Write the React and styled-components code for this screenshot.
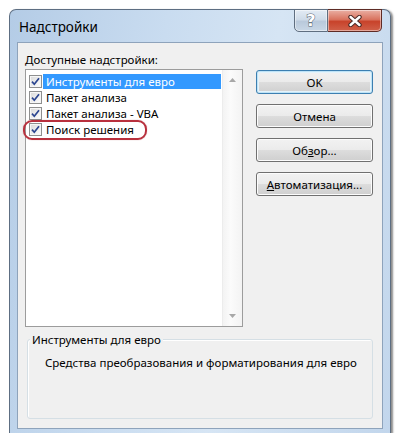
import React from "react"
import styled, { createGlobalStyle } from "styled-components"

const GlobalStyle = createGlobalStyle`
  body {
    margin: 0;
    background: #fff;
    font-family: "Noto Sans", "Segoe UI", sans-serif;
    color: #000;
  }
`

const Window = styled.div`
  box-sizing: border-box;
  width: 382px;
  height: 424px;
  margin: 9px 0 0 9px;
  display: flex;
  flex-direction: column;
  border: 1px solid #5d6e82;
  border-bottom: none;
  border-radius: 7px 7px 0 0;
  background: linear-gradient(100deg, #b4cce6 0%, #c9dcf0 35%, #d6e5f4 60%, #c2d6ec 100%);
  box-shadow: 2px 1px 2px rgba(0, 0, 0, 0.45);
`

const TitleBar = styled.div`
  height: 32px;
  display: flex;
  justify-content: space-between;
  padding: 0 8px 0 9px;
`

const Title = styled.div`
  align-self: center;
  font-size: 13.5px;
  padding-top: 2px;
`

const Controls = styled.div`
  display: flex;
  margin-top: -1px;
  height: 23px;
`

const CaptionButton = styled.div`
  box-sizing: border-box;
  width: ${({ $close }) => ($close ? "54px" : "34px")};
  height: 23px;
  display: flex;
  align-items: center;
  justify-content: center;
  border: 1px solid ${({ $close }) => ($close ? "#5e2b25" : "#5f6e80")};
  border-left: ${({ $close }) => ($close ? "none" : undefined)};
  border-radius: ${({ $close }) => ($close ? "0 0 5px 0" : "0 0 0 5px")};
  background: ${({ $close }) =>
    $close
      ? "linear-gradient(180deg, #eab0a4 0%, #d9735f 45%, #c8432b 55%, #d0614a 100%)"
      : "linear-gradient(180deg, #e3ebf4 0%, #cfdbe8 45%, #b9c9db 55%, #c9d7e6 100%)"};
  box-shadow: inset 0 0 0 1px rgba(255, 255, 255, 0.45);
`

const HelpGlyph = styled.span`
  font-family: "DejaVu Sans", sans-serif;
  font-weight: bold;
  font-size: 16px;
  line-height: 16px;
  color: #fff;
  -webkit-text-stroke: 1px #56626f;
  paint-order: stroke fill;
`

const Client = styled.div`
  flex: 1;
  margin: 0 7px 4px 7px;
  border: 1px solid #8ea3bb;
  background: #f0f0f0;
  padding: 9px 9px 0 7px;
  display: flex;
  flex-direction: column;
  font-size: 11.5px;
`

const FieldLabel = styled.div`
  line-height: 16px;
  margin-bottom: 1px;
`

const MainRow = styled.div`
  display: flex;
  gap: 13px;
`

const ListBox = styled.div`
  position: relative;
  box-sizing: border-box;
  width: 218px;
  height: 258px;
  border: 1px solid #9c9c9c;
  background: #fff;
  display: flex;
`

const Items = styled.div`
  flex: 1;
  padding: 3px 1px 0 3px;
`

const Item = styled.div`
  display: flex;
  align-items: center;
  height: 16px;
`

const ItemText = styled.div`
  flex: 1;
  margin-left: 1px;
  padding-left: 3px;
  line-height: 15px;
  height: 15px;
  background: ${({ $selected }) => ($selected ? "#3399ff" : "transparent")};
  color: ${({ $selected }) => ($selected ? "#fff" : "#000")};
  white-space: nowrap;
`

const ScrollBar = styled.div`
  width: 19px;
  display: flex;
  flex-direction: column;
  justify-content: space-between;
  border-left: 1px solid #ececec;
  background: linear-gradient(90deg, #f3f3f3, #fbfbfb 40%, #f3f3f3);
`

const ArrowButton = styled.div`
  height: 20px;
  display: flex;
  align-items: center;
  justify-content: center;
`

const Annotation = styled.div`
  position: absolute;
  left: -3px;
  top: 50px;
  width: 124px;
  height: 20px;
  box-sizing: border-box;
  border: 2px solid #b8303d;
  border-radius: 9px;
  box-shadow: 0 0 1px rgba(150, 20, 30, 0.5);
`

const Buttons = styled.div`
  display: flex;
  flex-direction: column;
  gap: 10px;
  padding-top: 1px;
`

const Button = styled.button`
  box-sizing: border-box;
  width: 117px;
  height: 24px;
  font-family: inherit;
  font-size: 11.5px;
  color: #000;
  border: 1px solid ${({ $default }) => ($default ? "#3c7fb1" : "#707070")};
  border-radius: 3px;
  background: linear-gradient(180deg, #f2f2f2 0%, #ebebeb 49%, #dddddd 50%, #cfcfcf 100%);
  box-shadow: ${({ $default }) =>
    $default ? "inset 0 0 0 1px #bfe3f6, inset 0 0 0 2px #e4f3fb" : "inset 0 0 0 1px #fcfcfc"};
  padding: 0;
`

const Group = styled.div`
  box-sizing: border-box;
  margin: 12px 0 0 2px;
  width: 346px;
  height: 80px;
  border: 1px solid #d5dfe5;
  border-radius: 3px;
  box-shadow: inset 1px 1px 0 #fff;
  padding: 0 0 0 2px;
`

const Legend = styled.div`
  width: fit-content;
  margin-top: -8px;
  padding: 0 2px;
  line-height: 16px;
  background: #f0f0f0;
`

const Description = styled.div`
  margin: 7px 0 0 15px;
  line-height: 16px;
`

function CheckBox() {
  return (
    <svg width="13" height="13" viewBox="0 0 13 13">
      <defs>
        <linearGradient id="cb" x1="0" y1="0" x2="1" y2="1">
          <stop offset="0" stopColor="#dcdcdc" />
          <stop offset="1" stopColor="#fbfbfb" />
        </linearGradient>
      </defs>
      <rect x="0.5" y="0.5" width="12" height="12" fill="#f6f6f6" stroke="#8e8f8f" />
      <rect x="2" y="2" width="9" height="9" fill="url(#cb)" />
      <path d="M3 6.6 L5.3 9.2 L10 3.2" fill="none" stroke="#2b4590" strokeWidth="1.7" />
    </svg>
  )
}

function Arrow({ down }) {
  return (
    <svg width="7" height="4" viewBox="0 0 7 4">
      <path d={down ? "M0 0 L7 0 L3.5 4 Z" : "M0 4 L7 4 L3.5 0 Z"} fill="#a8a8a8" />
    </svg>
  )
}

const items = [
  { name: "Инструменты для евро", selected: true },
  { name: "Пакет анализа" },
  { name: "Пакет анализа - VBA" },
  { name: "Поиск решения" },
]

export default function App() {
  return (
    <>
      <GlobalStyle />
      <Window>
        <TitleBar>
          <Title>Надстройки</Title>
          <Controls>
            <CaptionButton>
              <HelpGlyph>?</HelpGlyph>
            </CaptionButton>
            <CaptionButton $close>
              <svg width="14" height="12" viewBox="0 0 14 12">
                <path d="M2.5 2 L11.5 10 M11.5 2 L2.5 10" stroke="#4a2a26" strokeWidth="4.4" strokeLinecap="round" />
                <path d="M2.5 2 L11.5 10 M11.5 2 L2.5 10" stroke="#fff" strokeWidth="2.4" strokeLinecap="round" />
              </svg>
            </CaptionButton>
          </Controls>
        </TitleBar>
        <Client>
          <FieldLabel>
            <u>Д</u>оступные надстройки:
          </FieldLabel>
          <MainRow>
            <ListBox>
              <Items>
                {items.map((it) => (
                  <Item key={it.name}>
                    <CheckBox />
                    <ItemText $selected={it.selected}>{it.name}</ItemText>
                  </Item>
                ))}
              </Items>
              <ScrollBar>
                <ArrowButton>
                  <Arrow />
                </ArrowButton>
                <ArrowButton>
                  <Arrow down />
                </ArrowButton>
              </ScrollBar>
              <Annotation />
            </ListBox>
            <Buttons>
              <Button $default>OK</Button>
              <Button>Отмена</Button>
              <Button>
                Об<u>з</u>ор...
              </Button>
              <Button>
                <u>А</u>втоматизация...
              </Button>
            </Buttons>
          </MainRow>
          <Group>
            <Legend>Инструменты для евро</Legend>
            <Description>Средства преобразования и форматирования для евро</Description>
          </Group>
        </Client>
      </Window>
    </>
  )
}
